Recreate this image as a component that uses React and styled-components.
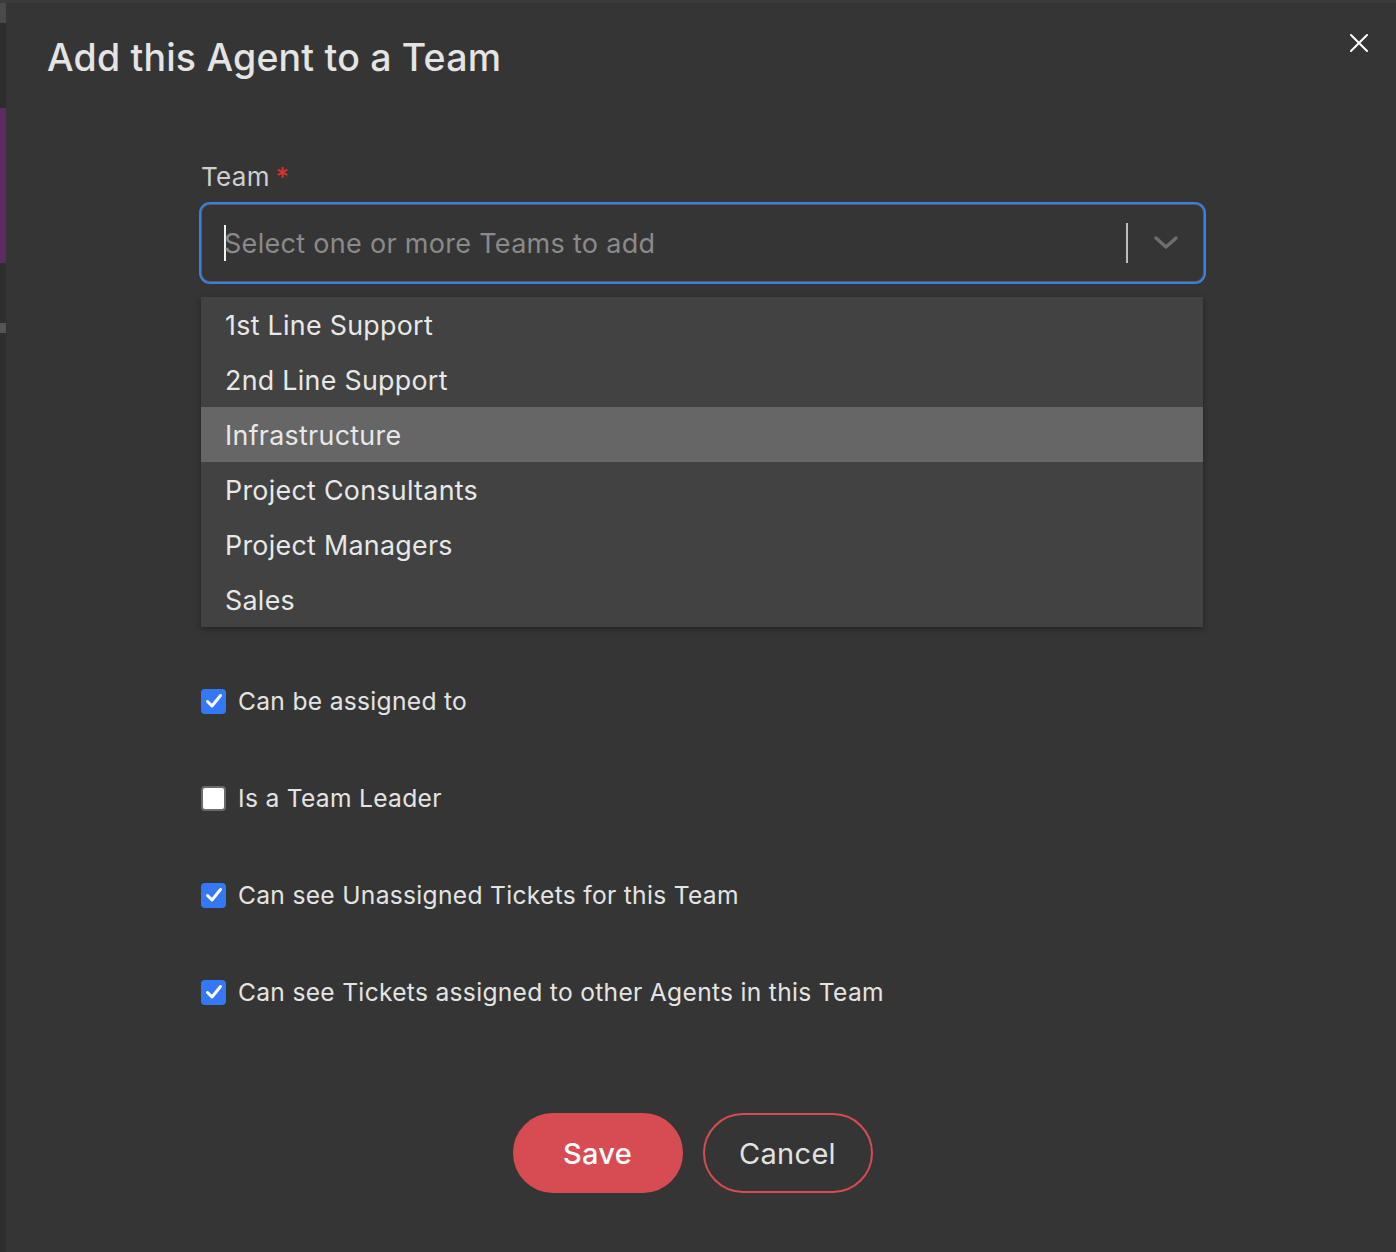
import React from "react";
import styled, { createGlobalStyle } from "styled-components";

const GlobalStyle = createGlobalStyle`
  html, body { margin: 0; padding: 0; background: #3b3b3b; }
  body { font-family: "Inter", "Liberation Sans", sans-serif; }
  * { box-sizing: border-box; }
`;

const Page = styled.div`
  display: flex;
  width: 1396px;
  height: 1252px;
  padding-top: 3px;
  background: #3b3b3b;
`;

const Backdrop = styled.div`
  width: 6px;
  display: flex;
  flex-direction: column;
  background: #2f2f2f;
`;

const BackdropBand = styled.div`
  height: ${(p) => p.$h}px;
  background: ${(p) => p.$c};
`;

const Dialog = styled.div`
  flex: 1;
  background: #353535;
  display: flex;
  flex-direction: column;
  padding: 30px 26px 0 41px;
`;

const Header = styled.div`
  display: flex;
  justify-content: space-between;
  align-items: flex-start;
`;

const Title = styled.h1`
  margin: 0;
  font-size: 37.5px;
  font-weight: 500;
  color: #e4e4e4;
  line-height: 50px;
  letter-spacing: 0.2px;
`;

const CloseButton = styled.button`
  background: none;
  border: none;
  padding: 0;
  margin-top: -1px;
  width: 22px;
  height: 22px;
  display: flex;
  align-items: center;
  justify-content: center;
  cursor: pointer;
`;

const Form = styled.div`
  width: 1003px;
  margin: 77px 0 0 154px;
  display: flex;
  flex-direction: column;
`;

const Label = styled.label`
  font-size: 26px;
  color: #cfcfcf;
  line-height: 34px;
  margin-bottom: 10px;
  letter-spacing: 0.3px;
`;

const Required = styled.span`
  color: #e0322d;
  margin-left: 6px;
`;

const SelectWrap = styled.div`
  position: relative;
`;

const SelectBox = styled.div`
  height: 78px;
  border-radius: 9px;
  border: 1px solid #5a5a5a;
  box-shadow: 0 0 0 2px #3a7ee6;
  display: flex;
  align-items: center;
  padding-left: 22px;
  background: #353535;
`;

const Caret = styled.span`
  width: 2px;
  height: 36px;
  background: #f2f2f2;
  margin-right: -2px;
`;

const Placeholder = styled.span`
  flex: 1;
  font-size: 27px;
  color: #8a8a8a;
  letter-spacing: 0.3px;
`;

const Separator = styled.span`
  width: 2px;
  height: 40px;
  background: #bdbdbd;
`;

const Indicator = styled.span`
  width: 75px;
  display: flex;
  align-items: center;
  justify-content: center;
`;

const Menu = styled.ul`
  position: absolute;
  left: 0;
  right: 1px;
  top: calc(100% + 15px);
  margin: 0;
  padding: 0;
  list-style: none;
  background: #424242;
  box-shadow: 0 2px 6px rgba(0, 0, 0, 0.35);
`;

const MenuItem = styled.li`
  height: 55px;
  display: flex;
  align-items: center;
  padding-left: 24px;
  font-size: 26.8px;
  color: #e8e8e8;
  letter-spacing: 0.3px;
  background: ${(p) => (p.$active ? "#666666" : "transparent")};
`;

const Options = styled.div`
  margin-top: 404px;
  display: flex;
  flex-direction: column;
  gap: 67px;
`;

const OptionRow = styled.label`
  display: flex;
  align-items: center;
  gap: 12px;
  height: 30px;
  font-size: 24.6px;
  color: #e4e4e4;
  letter-spacing: 0.3px;
`;

const Box = styled.span`
  width: 25px;
  height: 25px;
  border-radius: 4px;
  display: flex;
  align-items: center;
  justify-content: center;
  background: ${(p) => (p.$checked ? "#3478f6" : "#ffffff")};
  border: ${(p) => (p.$checked ? "none" : "2px solid #6b6b6b")};
`;

const Buttons = styled.div`
  display: flex;
  justify-content: center;
  gap: 20px;
  margin-top: 106px;
  padding-right: 20px;
`;

const Button = styled.button`
  width: 170px;
  height: 80px;
  border-radius: 40px;
  font-family: inherit;
  font-size: 29px;
  font-weight: ${(p) => (p.$primary ? 500 : 400)};
  letter-spacing: 0.3px;
  cursor: pointer;
  background: ${(p) => (p.$primary ? "#d64c52" : "transparent")};
  color: ${(p) => (p.$primary ? "#ffffff" : "#e2e2e2")};
  border: 2px solid #d64c52;
`;

const teams = [
  "1st Line Support",
  "2nd Line Support",
  "Infrastructure",
  "Project Consultants",
  "Project Managers",
  "Sales",
];

const options = [
  { label: "Can be assigned to", checked: true },
  { label: "Is a Team Leader", checked: false },
  { label: "Can see Unassigned Tickets for this Team", checked: true },
  { label: "Can see Tickets assigned to other Agents in this Team", checked: true },
];

const Check = () => (
  <svg width="18" height="16" viewBox="0 0 18 16">
    <path d="M2.5 8.5 L7 13 L15.5 2.5" fill="none" stroke="#fff" strokeWidth="3" strokeLinecap="round" strokeLinejoin="round" />
  </svg>
);

export default function App() {
  return (
    <>
      <GlobalStyle />
      <Page>
        <Backdrop>
          <BackdropBand $h={20} $c="#4a4a4a" />
          <BackdropBand $h={85} $c="#2d2d2d" />
          <BackdropBand $h={155} $c="#5e2a62" />
          <BackdropBand $h={60} $c="#2f2f2f" />
          <BackdropBand $h={10} $c="#555" />
        </Backdrop>
        <Dialog>
          <Header>
            <Title>Add this Agent to a Team</Title>
            <CloseButton aria-label="Close">
              <svg width="20" height="20" viewBox="0 0 20 20">
                <path d="M2 2 L18 18 M18 2 L2 18" stroke="#ffffff" strokeWidth="2" strokeLinecap="round" />
              </svg>
            </CloseButton>
          </Header>
          <Form>
            <Label>
              Team<Required>*</Required>
            </Label>
            <SelectWrap>
              <SelectBox>
                <Caret />
                <Placeholder>Select one or more Teams to add</Placeholder>
                <Separator />
                <Indicator>
                  <svg width="26" height="16" viewBox="0 0 26 16">
                    <path d="M3 3 L13 12 L23 3" fill="none" stroke="#6e6e6e" strokeWidth="3.5" strokeLinecap="round" strokeLinejoin="round" />
                  </svg>
                </Indicator>
              </SelectBox>
              <Menu>
                {teams.map((t) => (
                  <MenuItem key={t} $active={t === "Infrastructure"}>
                    {t}
                  </MenuItem>
                ))}
              </Menu>
            </SelectWrap>
            <Options>
              {options.map((o) => (
                <OptionRow key={o.label}>
                  <Box $checked={o.checked}>{o.checked && <Check />}</Box>
                  {o.label}
                </OptionRow>
              ))}
            </Options>
            <Buttons>
              <Button $primary>Save</Button>
              <Button>Cancel</Button>
            </Buttons>
          </Form>
        </Dialog>
      </Page>
    </>
  );
}
